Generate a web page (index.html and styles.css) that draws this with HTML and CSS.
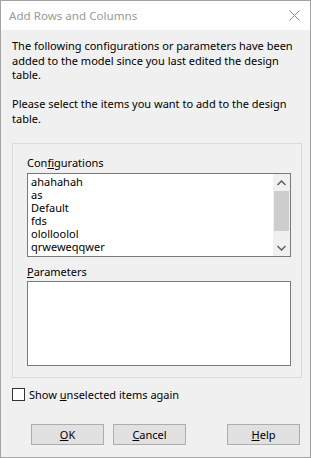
FILE: index.html
```html
<!DOCTYPE html>
<html>
<head>
<meta charset="utf-8">
<link rel="stylesheet" href="styles.css">
</head>
<body>
<div class="window">
  <div class="titlebar">
    <span class="title">Add Rows and Columns</span>
    <svg class="close" width="11" height="11" viewBox="0 0 11 11"><path d="M0.5 0.5 L10.5 10.5 M10.5 0.5 L0.5 10.5" stroke="#8a8a8a" stroke-width="1" fill="none"/></svg>
  </div>
  <div class="content">
    <p class="msg">The following configurations or parameters have been<br>added to the model since you last edited the design<br>table.</p>
    <p class="msg second">Please select the items you want to add to the design<br>table.</p>
    <div class="group">
      <div class="label">Con<u>f</u>igurations</div>
      <div class="listbox">
        <ul class="items">
          <li>ahahahah</li>
          <li>as</li>
          <li>Default</li>
          <li>fds</li>
          <li>ololloolol</li>
          <li>qrweweqqwer</li>
        </ul>
        <div class="scrollbar">
          <div class="arrow"><svg width="9" height="6" viewBox="0 0 9 6"><path d="M0.5 5 L4.5 1 L8.5 5" stroke="#606060" stroke-width="1.5" fill="none"/></svg></div>
          <div class="track"><div class="thumb"></div></div>
          <div class="arrow"><svg width="9" height="6" viewBox="0 0 9 6"><path d="M0.5 1 L4.5 5 L8.5 1" stroke="#606060" stroke-width="1.5" fill="none"/></svg></div>
        </div>
      </div>
      <div class="label second-label"><u>P</u>arameters</div>
      <div class="listbox empty"></div>
    </div>
    <div class="check"><span class="box"></span><span>Show <u>u</u>nselected items again</span></div>
    <div class="buttons">
      <button class="btn"><u>O</u>K</button>
      <button class="btn"><u>C</u>ancel</button>
      <span class="spacer"></span>
      <button class="btn"><u>H</u>elp</button>
    </div>
  </div>
</div>
</body>
</html>
```

FILE: styles.css
```css
* { box-sizing: border-box; }
html, body { margin: 0; padding: 0; background: #f0f0f0; }
body {
  font-family: "Noto Sans", "Open Sans", sans-serif;
  font-size: 11px;
  color: #000;
}
.window {
  width: 311px;
  height: 458px;
  border: 1px solid #a3a3a3;
  background: #f0f0f0;
  display: flex;
  flex-direction: column;
}
.titlebar {
  height: 29px;
  background: #fff;
  display: flex;
  align-items: center;
  padding: 0 10px 1px 8px;
}
.title {
  flex: 1;
  color: #999;
  font-size: 11.6px;
}
.close { display: block; margin-top: 1px; }
.content {
  flex: 1;
  padding: 9px 8px 0 11px;
  display: flex;
  flex-direction: column;
}
.msg {
  margin: 0;
  line-height: 14.5px;
  white-space: nowrap;
}
.msg.second { margin-top: 14.5px; }
.group {
  margin-top: 17px;
  width: 290px;
  height: 235px;
  border: 1px solid #dcdcdc;
  padding: 12px 0 0 14px;
}
.label {
  height: 14px;
  line-height: 14px;
  margin-bottom: 3px;
}
.second-label { margin-top: 8px; margin-bottom: 2px; }
.listbox {
  width: 264px;
  height: 84px;
  border: 1px solid #7a7a7a;
  background: #fff;
  display: flex;
}
.listbox.empty { height: 85px; }
.items {
  list-style: none;
  margin: 0;
  padding: 1px 0 0 3px;
  flex: 1;
}
.items li {
  height: 13px;
  line-height: 13px;
}
.scrollbar {
  width: 17px;
  background: #f0f0f0;
  display: flex;
  flex-direction: column;
}
.arrow {
  height: 17px;
  display: flex;
  align-items: center;
  justify-content: center;
}
.arrow svg { display: block; }
.track { flex: 1; display: flex; flex-direction: column; }
.thumb {
  margin: 0 1px;
  height: 40px;
  background: #cdcdcd;
}
.check {
  margin-top: 9px;
  display: flex;
  align-items: center;
  gap: 4px;
  height: 14px;
}
.box {
  width: 13px;
  height: 13px;
  border: 1px solid #333;
  background: #fff;
}
.buttons {
  margin-top: 23px;
  display: flex;
  padding-left: 19px;
  gap: 9px;
  padding-right: 2px;
}
.spacer { flex: 1; }
.btn {
  width: 73px;
  height: 21px;
  background: #e1e1e1;
  border: 1px solid #adadad;
  font: inherit;
  color: #000;
  padding: 0;
  line-height: 19px;
}
```
